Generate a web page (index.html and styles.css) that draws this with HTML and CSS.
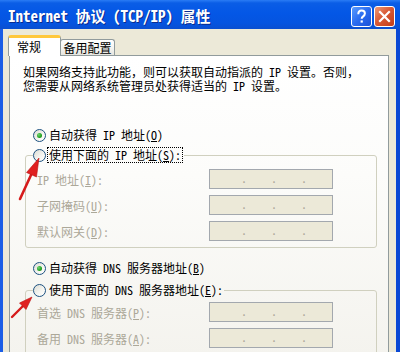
FILE: index.html
```html
<!DOCTYPE html>
<html lang="zh-CN">
<head>
<meta charset="utf-8">
<link rel="stylesheet" href="styles.css">
</head>
<body>
<div class="window">
  <div class="titlebar">
    <span class="title">Internet 协议 (TCP/IP) 属性</span>
    <div class="tbtns">
      <span class="tbtn help"><svg width="19" height="19" viewBox="0 0 19 19"><path d="M6.3 7.2 C6.3 4.8 7.8 3.6 9.6 3.6 C11.5 3.6 12.9 4.8 12.9 6.6 C12.9 8.2 11.9 8.9 10.9 9.6 C10.1 10.2 9.7 10.6 9.7 11.8" fill="none" stroke="#fff" stroke-width="2"/><rect x="8.6" y="13.4" width="2.2" height="2.2" fill="#fff"/></svg></span>
      <span class="tbtn close"><svg width="19" height="19" viewBox="0 0 19 19"><path d="M5 5 L14 14 M14 5 L5 14" stroke="#fff" stroke-width="2.2" stroke-linecap="square"/></svg></span>
    </div>
  </div>
  <div class="client">
    <div class="tabs">
      <div class="tab active">常规</div>
      <div class="tab">备用配置</div>
    </div>
    <div class="panel">
      <div class="intro">
        <div class="iline">如果网络支持此功能，则可以获取自动指派的 IP 设置。否则，</div>
        <div class="iline">您需要从网络系统管理员处获得适当的 IP 设置。</div>
      </div>

      <div class="radio-row first"><span class="radio checked"></span><span class="rtext">自动获得 IP 地址(<u>O</u>)</span></div>

      <fieldset class="group">
        <legend><span class="radio"></span><span class="rtext focus">使用下面的 IP 地址(<u>S</u>):</span></legend>
        <div class="fields">
          <span class="lbl">IP 地址(<u>I</u>):</span>
          <div class="ipbox"><span class="dot">.</span><span class="dot">.</span><span class="dot">.</span></div>
          <span class="lbl">子网掩码(<u>U</u>):</span>
          <div class="ipbox"><span class="dot">.</span><span class="dot">.</span><span class="dot">.</span></div>
          <span class="lbl">默认网关(<u>D</u>):</span>
          <div class="ipbox"><span class="dot">.</span><span class="dot">.</span><span class="dot">.</span></div>
        </div>
      </fieldset>

      <div class="radio-row third"><span class="radio checked"></span><span class="rtext">自动获得 DNS 服务器地址(<u>B</u>)</span></div>

      <fieldset class="group second">
        <legend><span class="radio"></span><span class="rtext nofocus">使用下面的 DNS 服务器地址(<u>E</u>):</span></legend>
        <div class="fields dns">
          <span class="lbl">首选 DNS 服务器(<u>P</u>):</span>
          <div class="ipbox"><span class="dot">.</span><span class="dot">.</span><span class="dot">.</span></div>
          <span class="lbl">备用 DNS 服务器(<u>A</u>):</span>
          <div class="ipbox"><span class="dot">.</span><span class="dot">.</span><span class="dot">.</span></div>
        </div>
      </fieldset>
    </div>
  </div>
  <svg class="arrows" width="400" height="352" viewBox="0 0 400 352">
    <line x1="20" y1="199" x2="31" y2="175" stroke="#d61b1b" stroke-width="2.6" stroke-linecap="round"/>
    <polygon points="39,158 36.5,177 26.5,172.5" fill="#e02020" stroke="#b81010" stroke-width="0.6"/>
    <line x1="12" y1="317" x2="24" y2="305" stroke="#d61b1b" stroke-width="2.4" stroke-linecap="round"/>
    <polygon points="32,297 26,309.5 19.5,303" fill="#e02020" stroke="#b81010" stroke-width="0.6"/>
  </svg>
</div>
</body>
</html>
```

FILE: styles.css
```css
* { box-sizing: border-box; }

html, body {
  margin: 0;
  padding: 0;
}

body {
  width: 400px;
  height: 352px;
  overflow: hidden;
  font-family: "Noto Sans Mono CJK SC", "Noto Sans CJK SC", "DejaVu Sans Mono", monospace;
  font-size: 12px;
  color: #000;
}

.window {
  position: relative;
  width: 400px;
  height: 352px;
  background: linear-gradient(to right, #1b5ee6 0, #0a48d4 100%);
  display: flex;
  flex-direction: column;
}

.titlebar {
  height: 29px;
  flex: none;
  display: flex;
  align-items: center;
  justify-content: space-between;
  padding: 0 5px 0 8px;
  background: linear-gradient(to bottom, #2a7cf5 0, #0a5de6 3px, #0457e6 45%, #0554e0 80%, #0a4fd0 100%);
}

.title {
  color: #fff;
  font-weight: bold;
  font-size: 15px;
  line-height: 18px;
  padding-top: 2px;
  text-shadow: 1px 1px 0 #0a2c90;
  white-space: pre;
}

.tbtns {
  display: flex;
  gap: 2px;
  padding-top: 3px;
}

.tbtn {
  width: 21px;
  height: 21px;
  border: 1px solid #fff;
  border-radius: 3px;
  display: flex;
  align-items: center;
  justify-content: center;
}

.tbtn svg { display: block; }

.help {
  background: linear-gradient(135deg, #5a9cff 0, #2a6cf0 50%, #1a50d8 100%);
}

.close {
  background: linear-gradient(135deg, #ec9a78 0, #d95a36 45%, #c23c18 100%);
}

.client {
  flex: 1;
  margin: 0 4px 0 3px;
  background: #ece9d8;
  padding: 6px 0 0 6px;
  display: flex;
  flex-direction: column;
  overflow: hidden;
}

.tabs {
  display: flex;
  align-items: flex-end;
  height: 20px;
  margin-left: -1px;
}

.tab {
  font-size: 12px;
  line-height: 15px;
  height: 16px;
  width: 55px;
  text-align: center;
  border: 1px solid #919b9c;
  border-bottom: none;
  border-radius: 3px 3px 0 0;
  background: linear-gradient(to bottom, #ffffff 0, #f3f3ef 60%, #e6e5df 100%);
}

.tab.active {
  position: relative;
  z-index: 1;
  width: 53px;
  height: 21px;
  margin-bottom: -1px;
  margin-right: -1px;
  text-align: left;
  padding-left: 8px;
  line-height: 17px;
  background: #fff;
  border-top: 3px solid #ffc83c;
}

.panel {
  width: 380px;
  flex: 1;
  border: 1px solid #919b9c;
  border-bottom: none;
  background: linear-gradient(to bottom, #ffffff 0, #fcfcfa 40%, #f4f3ee 100%);
  padding: 9px 0 0 13px;
}

.intro {
  display: flex;
  flex-direction: column;
}

.iline {
  line-height: 14px;
  height: 14px;
  white-space: nowrap;
}

.radio-row {
  display: flex;
  align-items: center;
  height: 16px;
  padding-left: 10px;
}

.radio-row.first { margin-top: 34px; }
.radio-row.third { margin-top: 12px; }

.radio {
  width: 13px;
  height: 13px;
  flex: none;
  border: 1px solid #1c5180;
  border-radius: 50%;
  background: linear-gradient(135deg, #dcdcd4 0, #f6f6f2 60%, #ffffff 100%);
  display: flex;
  align-items: center;
  justify-content: center;
}

.radio.checked::after {
  content: "";
  width: 5px;
  height: 5px;
  border-radius: 50%;
  background: radial-gradient(circle at 35% 35%, #6fd46f 0, #21a121 60%, #178517 100%);
}

.rtext {
  margin-left: 3px;
  line-height: 14px;
  white-space: nowrap;
}

.rtext.focus {
  margin-left: 1px;
  border: 1px dotted #000;
  padding: 0 1px;
}

.group {
  margin: 4px 0 0 2px;
  width: 352px;
  padding: 0;
  border: 1px solid #d0d0bf;
  border-radius: 3px;
  min-width: 0;
}

.group.second { margin-top: 6px; }

.group legend {
  display: flex;
  align-items: center;
  height: 16px;
  padding: 0 1px 0 0;
  margin-left: 7px;
}

.fields {
  display: grid;
  grid-template-columns: 172px 124px;
  grid-auto-rows: 20px;
  row-gap: 6px;
  align-items: center;
  padding: 6px 10px 6px 11px;
}

.fields.dns { padding-top: 4px; }

.lbl {
  color: #aca899;
  white-space: nowrap;
}

.ipbox {
  height: 20px;
  border: 1px solid #a3a8ae;
  background: #ece9d8;
  display: flex;
  padding-left: 31px;
  color: #aca899;
  line-height: 16px;
}

.dot {
  width: 30px;
  flex: none;
}

u { text-decoration: underline; text-underline-offset: 1px; }

.arrows {
  position: absolute;
  left: 0;
  top: 0;
  pointer-events: none;
}
```
